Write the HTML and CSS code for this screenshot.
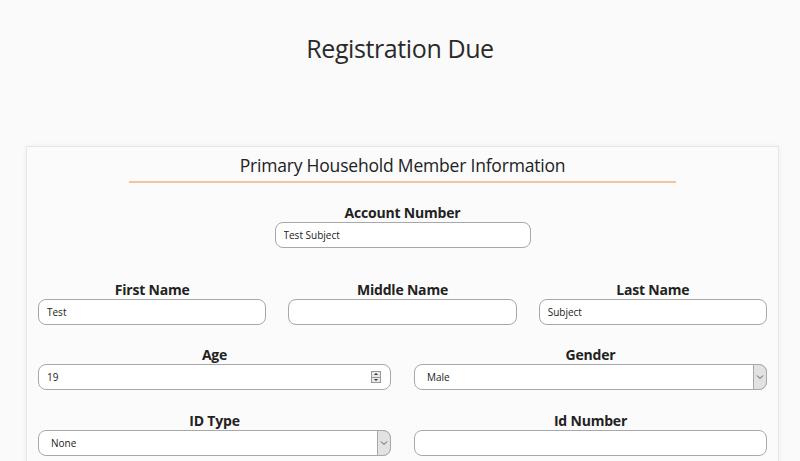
FILE: index.html
```html
<!DOCTYPE html>
<html>
<head>
<meta charset="utf-8">
<link rel="stylesheet" href="styles.css">
</head>
<body>
<h1 class="page-title">Registration Due</h1>
<div class="card">
  <h2 class="card-title">Primary Household Member Information</h2>
  <div class="rule"></div>
  <div class="field account">
    <label class="lbl">Account Number</label>
    <input class="inp" type="text" value="Test Subject">
  </div>
  <div class="row three">
    <div class="field">
      <label class="lbl">First Name</label>
      <input class="inp" type="text" value="Test">
    </div>
    <div class="field">
      <label class="lbl">Middle Name</label>
      <input class="inp" type="text" value="">
    </div>
    <div class="field">
      <label class="lbl">Last Name</label>
      <input class="inp" type="text" value="Subject">
    </div>
  </div>
  <div class="row two">
    <div class="field">
      <label class="lbl">Age</label>
      <div class="wrap">
        <input class="inp" type="text" value="19">
        <span class="spin"><span class="up"></span><span class="dn"></span></span>
      </div>
    </div>
    <div class="field">
      <label class="lbl">Gender</label>
      <div class="wrap">
        <div class="inp sel">Male</div>
        <span class="arrow"><svg width="8" height="6" viewBox="0 0 8 6"><path d="M1 1.5 L4 4.5 L7 1.5" fill="none" stroke="#555" stroke-width="1"/></svg></span>
      </div>
    </div>
  </div>
  <div class="row two last">
    <div class="field">
      <label class="lbl">ID Type</label>
      <div class="wrap">
        <div class="inp sel">None</div>
        <span class="arrow"><svg width="8" height="6" viewBox="0 0 8 6"><path d="M1 1.5 L4 4.5 L7 1.5" fill="none" stroke="#555" stroke-width="1"/></svg></span>
      </div>
    </div>
    <div class="field">
      <label class="lbl">Id Number</label>
      <input class="inp" type="text" value="">
    </div>
  </div>
</div>
</body>
</html>
```
FILE: styles.css
```css
html, body {
  margin: 0;
  padding: 0;
  background: #fafafa;
  font-family: "Open Sans", "Noto Sans", sans-serif;
  color: #222;
  overflow: hidden;
}
.page-title {
  margin: 30px 0 0;
  text-align: center;
  font-weight: 400;
  font-size: 25px;
  line-height: 36px;
  color: #2a2a2a;
  letter-spacing: -0.4px;
}
.card {
  margin: 80px 21px 0 26px;
  background: #fbfbfb;
  border: 1px solid #e6e6e6;
  box-shadow: 0 0 6px rgba(0,0,0,0.05);
  padding: 4px 11px 20px;
  height: 400px;
}
.card-title {
  margin: 0;
  text-align: center;
  font-weight: 400;
  font-size: 17.5px;
  line-height: 28px;
  padding-bottom: 2px;
  color: #222;
  letter-spacing: -0.2px;
}
.rule {
  width: 547px;
  height: 2px;
  margin: 0 auto;
  background: #f6c49c;
}
.field {
  display: flex;
  flex-direction: column;
  align-items: stretch;
  min-width: 0;
}
.account {
  width: 256px;
  margin: 21px auto 0;
}
.lbl {
  display: block;
  text-align: center;
  font-weight: 700;
  font-size: 14px;
  line-height: 18px;
  color: #222;
  letter-spacing: -0.2px;
}
.inp {
  box-sizing: border-box;
  width: 100%;
  height: 26px;
  margin: 0;
  border: 1px solid #a8a8a8;
  border-radius: 8px;
  background: #fff;
  font-family: "Open Sans", "Noto Sans", sans-serif;
  font-size: 10px;
  color: #222;
  padding: 0 8px;
  outline: none;
  display: flex;
  align-items: center;
}
.row {
  display: grid;
  margin-top: 33px;
}
.row.three {
  grid-template-columns: 1fr 1fr 1fr;
  column-gap: 22px;
}
.row.two {
  grid-template-columns: 1fr 1fr;
  column-gap: 23px;
  margin-top: 21px;
}
.row.two.last {
  margin-top: 22px;
}
.wrap {
  position: relative;
}
.sel {
  padding-left: 12px;
}
.spin {
  position: absolute;
  right: 10px;
  top: 7px;
  width: 10px;
  height: 12px;
  box-sizing: border-box;
  border: 1px solid #999;
  background: #e8e8e8;
  display: flex;
  flex-direction: column;
}
.spin .up, .spin .dn {
  flex: 1;
  position: relative;
}
.spin .up {
  border-bottom: 1px solid #999;
}
.spin .up::after {
  content: "";
  position: absolute;
  left: 2px;
  top: 1px;
  border-left: 2px solid transparent;
  border-right: 2px solid transparent;
  border-bottom: 2px solid #333;
}
.spin .dn::after {
  content: "";
  position: absolute;
  left: 2px;
  top: 1px;
  border-left: 2px solid transparent;
  border-right: 2px solid transparent;
  border-top: 2px solid #333;
}
.arrow {
  position: absolute;
  right: 0;
  top: 0;
  width: 14px;
  height: 26px;
  box-sizing: border-box;
  background: #e2e2e2;
  border: 1px solid #a8a8a8;
  border-radius: 0 8px 8px 0;
  display: flex;
  align-items: center;
  justify-content: center;
}
```
